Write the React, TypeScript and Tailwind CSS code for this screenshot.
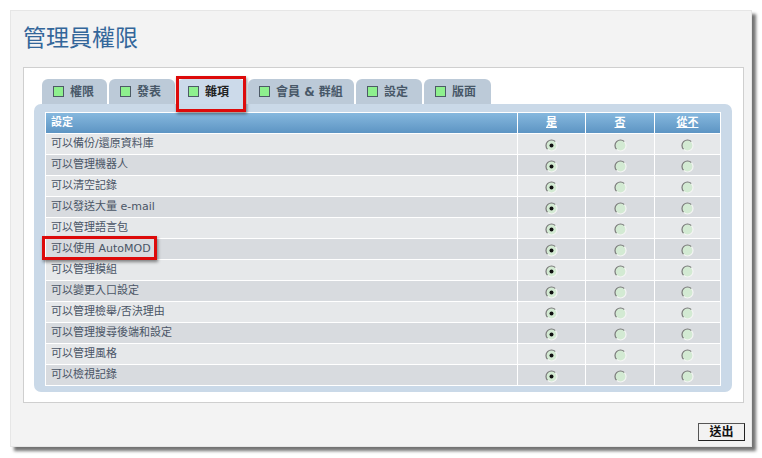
import React from "react";

const tabs = [
  { label: "權限", w: "w-[65px]" },
  { label: "發表", w: "w-[66px]" },
  { label: "雜項", w: "w-[68px]" },
  { label: "會員 & 群組", w: "w-[106px]" },
  { label: "設定", w: "w-[66px]" },
  { label: "版面", w: "w-[67px]" },
];
const activeTab = 2;

const rows = [
  "可以備份/還原資料庫",
  "可以管理機器人",
  "可以清空記錄",
  "可以發送大量 e-mail",
  "可以管理語言包",
  "可以使用 AutoMOD",
  "可以管理模組",
  "可以變更入口設定",
  "可以管理檢舉/否決理由",
  "可以管理搜尋後端和設定",
  "可以管理風格",
  "可以檢視記錄",
];

const font = {
  fontFamily: '"DejaVu Sans", "Noto Sans CJK TC", sans-serif',
};

function Radio({ checked }: { checked?: boolean }) {
  return (
    <svg width="13" height="13" viewBox="0 0 13 13" className="inline-block">
      <circle cx="6.5" cy="6.5" r="5.5" fill="#d3ead3" />
      <path d="M2.6 10.4 A5.5 5.5 0 0 1 10.4 2.6" fill="none" stroke="#7a7a7a" strokeWidth="1.2" />
      <path d="M10.4 2.6 A5.5 5.5 0 0 1 2.6 10.4" fill="none" stroke="#f4f4f4" strokeWidth="1.2" />
      {checked && <circle cx="6.5" cy="6.5" r="2" fill="#111" />}
    </svg>
  );
}

export default function App() {
  return (
    <div className="bg-white w-[762px] h-[458px] pt-[10px] pl-[10px]" style={font}>
      <div className="w-[742px] h-[437px] bg-[#f3f3f3] border border-[#e6e6e6] shadow-[4px_4px_3px_rgba(0,0,0,0.55)] pl-[12px] pt-[11px] flex flex-col">
        <h1 className="text-[23px] leading-[32px] text-[#33669a] h-[32px] font-normal">管理員權限</h1>

        <div className="mt-[13px] w-[721px] h-[336px] bg-white border border-[#cfcfcf] pt-[11px] px-[10px]">
          {/* tab strip */}
          <div className="flex gap-[2px] ml-[8px] h-[25px] items-end">
            {tabs.map((t, i) => (
              <div
                key={t.label}
                className={
                  "relative h-[25px] shrink-0 rounded-t-[6px] pl-[11px] flex items-center gap-[6px] text-[12px] font-bold " +
                  t.w +
                  " " +
                  (i === activeTab
                    ? "bg-[#ccdaea] text-[#222]"
                    : "bg-[#bccad8] text-[#485868]") +
                  (i === 3 ? " ml-[1px]" : "")
                }
              >
                <span className="w-[11px] h-[11px] bg-[#8ef08e] border border-[#4d5a66] shrink-0" />
                <span className="whitespace-pre leading-none">{t.label}</span>
                {i === activeTab && (
                  <span className="absolute -left-[1px] -top-[3px] -right-[1px] -bottom-[8px] border-[3px] border-[#dd0a0a] shadow-[1px_2px_3px_rgba(0,0,0,0.45)] pointer-events-none" />
                )}
              </div>
            ))}
          </div>

          {/* tab body */}
          <div className="w-[698px] h-[288px] bg-[#cad9e8] rounded-[7px] pt-[8px] px-[11px]">
            <table className="w-[676px] border-collapse text-[11px]">
              <thead>
                <tr className="h-[21px] bg-gradient-to-b from-[#86b8de] to-[#5b93c2]">
                  <th className="border border-white text-left pl-[5px] text-white font-bold w-[472px]">設定</th>
                  <th className="border border-white text-white font-bold underline w-[68px]">是</th>
                  <th className="border border-white text-white font-bold underline w-[69px]">否</th>
                  <th className="border border-white text-white font-bold underline">從不</th>
                </tr>
              </thead>
              <tbody>
                {rows.map((r, i) => (
                  <tr key={r} className={"h-[21px] " + (i % 2 === 0 ? "bg-[#e6e8ea]" : "bg-[#d8dbdf]")}>
                    <td className="border border-white pl-[5px] text-[#4a5566]">
                      <div className="relative">
                        {r}
                        {i === 5 && (
                          <span className="absolute -left-[9px] -top-[5px] w-[115px] h-[24px] border-[3px] border-[#dd0a0a] shadow-[1px_2px_3px_rgba(0,0,0,0.45)] pointer-events-none" />
                        )}
                      </div>
                    </td>
                    <td className="border border-white text-center leading-none pt-[2px]">
                      <Radio checked />
                    </td>
                    <td className="border border-white text-center leading-none pt-[2px]">
                      <Radio />
                    </td>
                    <td className="border border-white text-center leading-none pt-[2px]">
                      <Radio />
                    </td>
                  </tr>
                ))}
              </tbody>
            </table>
          </div>
        </div>

        <div className="flex justify-end pr-[6px] mt-[20px]">
          <button className="w-[47px] h-[18px] bg-[#f2f2f2] border border-[#555] border-r-[#222] border-b-[#222] text-[12px] font-bold text-[#111] leading-none">
            送出
          </button>
        </div>
      </div>
    </div>
  );
}
